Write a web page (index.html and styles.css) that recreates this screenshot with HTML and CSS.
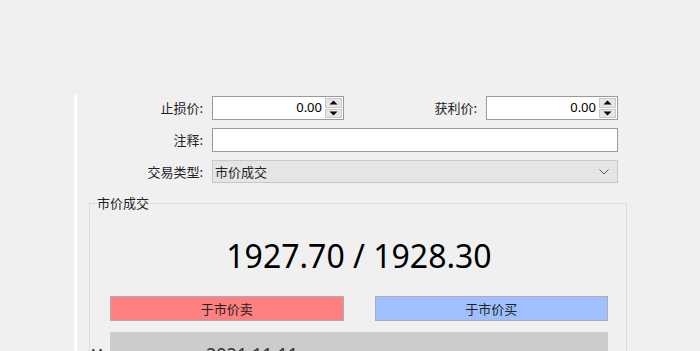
FILE: index.html
```html
<!DOCTYPE html>
<html lang="zh">
<head>
<meta charset="utf-8">
<link rel="stylesheet" href="styles.css">
</head>
<body>
<div class="top-space"></div>
<div class="panel">
  <div class="form">
    <label class="lbl">止损价:</label>
    <div class="spin">
      <span class="spin-val">0.00</span>
      <span class="spin-btns">
        <span class="sb"><svg width="9" height="5" viewBox="0 0 9 5"><path d="M0.5 4.5 L4.5 0.5 L8.5 4.5 Z" fill="#000"/></svg></span>
        <span class="sb"><svg width="9" height="5" viewBox="0 0 9 5"><path d="M0.5 0.5 L4.5 4.5 L8.5 0.5 Z" fill="#000"/></svg></span>
      </span>
    </div>
    <label class="lbl">获利价:</label>
    <div class="spin">
      <span class="spin-val">0.00</span>
      <span class="spin-btns">
        <span class="sb"><svg width="9" height="5" viewBox="0 0 9 5"><path d="M0.5 4.5 L4.5 0.5 L8.5 4.5 Z" fill="#000"/></svg></span>
        <span class="sb"><svg width="9" height="5" viewBox="0 0 9 5"><path d="M0.5 0.5 L4.5 4.5 L8.5 0.5 Z" fill="#000"/></svg></span>
      </span>
    </div>

    <label class="lbl">注释:</label>
    <div class="text-input wide"></div>

    <label class="lbl">交易类型:</label>
    <div class="combo wide">
      <span>市价成交</span>
      <svg class="chev" width="10" height="6" viewBox="0 0 10 6"><path d="M0.5 0.5 L5 5 L9.5 0.5" fill="none" stroke="#555" stroke-width="1"/></svg>
    </div>
  </div>

  <fieldset class="group">
    <legend>市价成交</legend>
    <div class="price">1927.70 / 1928.30</div>
    <div class="btns">
      <div class="btn sell">于市价卖</div>
      <div class="btn buy">于市价买</div>
    </div>
    <div class="bottom-row">
      <span class="side">M</span>
      <div class="bar"><span>2021.11.11</span></div>
    </div>
  </fieldset>
</div>
</body>
</html>
```
FILE: styles.css
```css
html, body {
  margin: 0;
  padding: 0;
  background: #f0f0f0;
  overflow: hidden;
  height: 351px;
  font-family: "Noto Sans", "Noto Sans CJK SC", sans-serif;
  font-size: 13px;
  color: #000;
}
.top-space { height: 95px; }
.panel {
  margin-left: 74px;
  border-left: 3px solid #ffffff;
  height: 300px;
  padding-top: 1px;
}
.form {
  display: grid;
  grid-template-columns: 126px 132px 124px 132px;
  column-gap: 9px;
  row-gap: 8px;
  grid-template-rows: 24px 24px 23px;
}
.lbl {
  font-family: "Noto Sans CJK SC", sans-serif;
  font-size: 13px;
  text-align: right;
  align-self: center;
  line-height: 16px;
  color: #222;
}
.spin {
  box-sizing: border-box;
  background: #fff;
  border: 1px solid #9a9a9a;
  display: flex;
  align-items: stretch;
}
.spin-val {
  flex: 1;
  text-align: right;
  padding-right: 3px;
  line-height: 21px;
  font-family: "Noto Sans", sans-serif;
  font-size: 13px;
}
.spin-btns {
  width: 17px;
  display: flex;
  flex-direction: column;
  gap: 1px;
  padding: 1px 1px 1px 0;
}
.sb {
  flex: 1;
  background: #e6e6e6;
  border: 1px solid #c8c8c8;
  display: flex;
  align-items: center;
  justify-content: center;
}
.sb svg { display: block; }
.wide { grid-column: 2 / 5; }
.text-input {
  box-sizing: border-box;
  background: #fff;
  border: 1px solid #9a9a9a;
}
.combo {
  box-sizing: border-box;
  background: #e5e5e5;
  border: 1px solid #c8c8c8;
  display: flex;
  align-items: center;
  justify-content: space-between;
  padding: 0 8px 0 2px;
  font-family: "Noto Sans CJK SC", sans-serif;
  color: #222;
}
.group {
  margin: 13px 0 0 12px;
  width: 538px;
  box-sizing: border-box;
  border: 1px solid #dcdcdc;
  padding: 0;
  min-width: 0;
}
.group legend {
  font-family: "Noto Sans CJK SC", sans-serif;
  font-size: 13px;
  padding: 0 1px;
  margin-left: 6px;
  line-height: 14px;
  color: #222;
}
.price {
  text-align: center;
  font-family: "Noto Sans", sans-serif;
  font-size: 32px;
  line-height: 40px;
  margin-top: 26px;
  padding-left: 2px;
  color: #000;
}
.btns {
  display: grid;
  grid-template-columns: 1fr 1fr;
  column-gap: 31px;
  padding: 0 18px 0 20px;
  margin-top: 20px;
}
.btn {
  box-sizing: border-box;
  height: 25px;
  border: 1px solid #adadad;
  text-align: center;
  line-height: 23px;
  font-family: "Noto Sans CJK SC", sans-serif;
  font-size: 13px;
  color: #222;
}
.sell { background: #ff8080; }
.buy { background: #9fbfff; }
.bottom-row {
  display: flex;
  margin-top: 11px;
  padding-right: 18px;
}
.side {
  width: 20px;
  padding-top: 12px;
  font-size: 13px;
  color: #333;
  text-align: left;
  padding-left: 1px;
  box-sizing: border-box;
}
.bar {
  flex: 1;
  height: 40px;
  background: #cccccc;
  padding-left: 96px;
  padding-top: 12px;
  box-sizing: border-box;
  color: #333;
  font-size: 18px;
  line-height: 20px;
}
```
